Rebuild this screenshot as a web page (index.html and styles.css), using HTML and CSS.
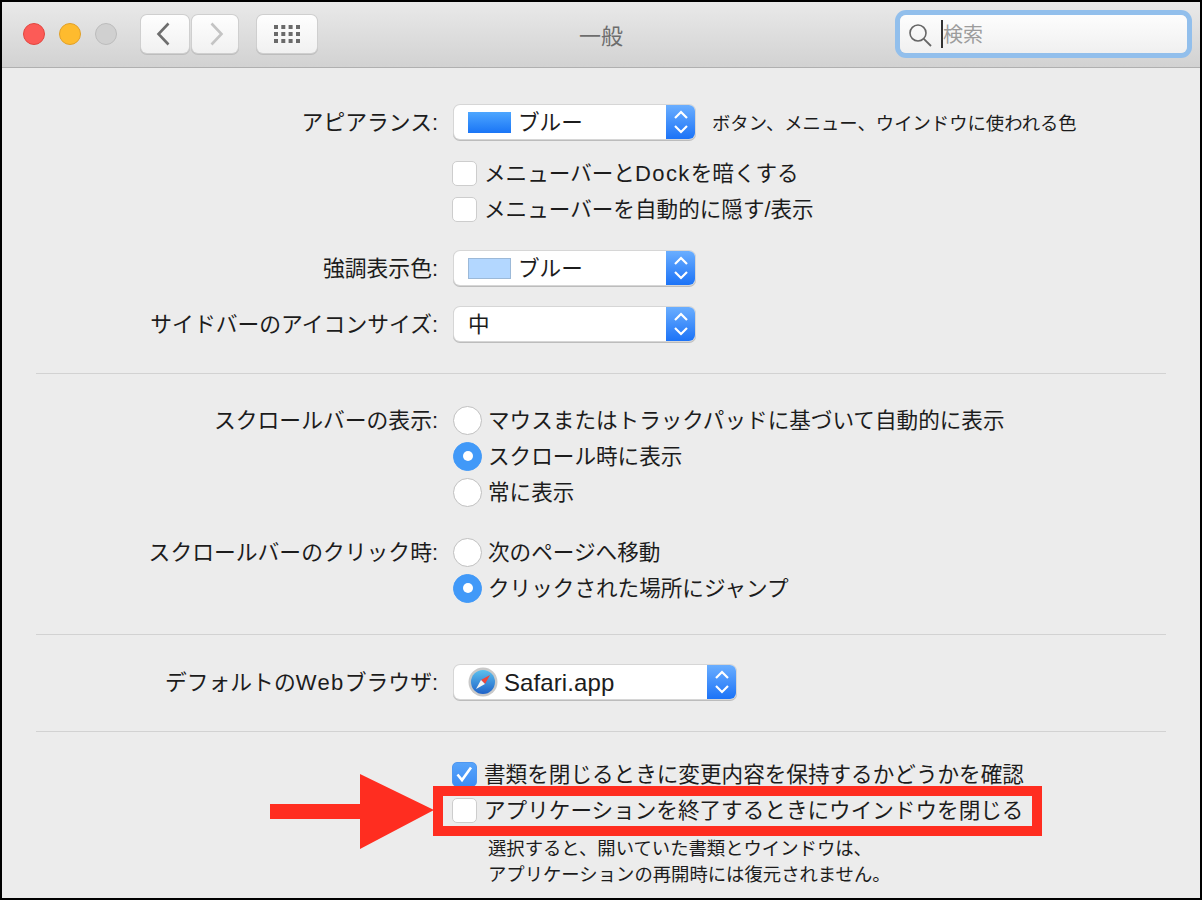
FILE: index.html
```html
<!DOCTYPE html>
<html lang="ja">
<head>
<meta charset="utf-8">
<title>一般</title>
<link rel="stylesheet" href="styles.css">
</head>
<body>
<div class="window">
  <header class="toolbar">
    <div class="lights">
      <span class="light red"></span>
      <span class="light yellow"></span>
      <span class="light gray"></span>
    </div>
    <div class="nav">
      <button class="tool back"><svg width="14" height="24" viewBox="0 0 14 24"><path d="M12.5 1.5 L2.5 12 L12.5 22.5" fill="none" stroke="#6e6e6e" stroke-width="2.6"/></svg></button>
      <button class="tool fwd"><svg width="14" height="24" viewBox="0 0 14 24"><path d="M1.5 1.5 L11.5 12 L1.5 22.5" fill="none" stroke="#c4c4c4" stroke-width="2.6"/></svg></button>
    </div>
    <button class="tool grid-btn">
      <svg width="26" height="18" viewBox="0 0 26 18" fill="#6a6a6a">
        <rect x="0" y="0" width="4" height="4"/><rect x="7.3" y="0" width="4" height="4"/><rect x="14.6" y="0" width="4" height="4"/><rect x="22" y="0" width="4" height="4"/>
        <rect x="0" y="7" width="4" height="4"/><rect x="7.3" y="7" width="4" height="4"/><rect x="14.6" y="7" width="4" height="4"/><rect x="22" y="7" width="4" height="4"/>
        <rect x="0" y="14" width="4" height="4"/><rect x="7.3" y="14" width="4" height="4"/><rect x="14.6" y="14" width="4" height="4"/><rect x="22" y="14" width="4" height="4"/>
      </svg>
    </button>
    <div class="title">一般</div>
    <div class="search">
      <svg class="lens" width="24" height="24" viewBox="0 0 24 24"><circle cx="10" cy="10" r="8" fill="none" stroke="#666" stroke-width="1.6"/><path d="M15.8 15.8 L23 23" stroke="#666" stroke-width="1.8"/></svg>
      <span class="caret"></span>
      <span class="placeholder">検索</span>
    </div>
  </header>

  <main class="content">
    <section class="section s1">
      <div class="row">
        <div class="label">アピアランス:</div>
        <div class="control inline">
          <div class="popup"><span class="swatch blue"></span><span class="txt">ブルー</span><span class="stepper"><svg width="18" height="28" viewBox="0 0 18 28"><path d="M3 10 L9 4 L15 10 M3 18 L9 24 L15 18" fill="none" stroke="#fff" stroke-width="2.2"/></svg></span></div>
          <span class="note">ボタン、メニュー、ウインドウに使われる色</span>
        </div>
      </div>
      <div class="row gap15">
        <div class="label"></div>
        <div class="control"><label class="check"><span class="box"></span><span class="txt">メニューバーと<span class="latin">Dock</span>を暗くする</span></label></div>
      </div>
      <div class="row">
        <div class="label"></div>
        <div class="control"><label class="check"><span class="box"></span><span class="txt">メニューバーを自動的に隠す/表示</span></label></div>
      </div>
      <div class="row gap23">
        <div class="label">強調表示色:</div>
        <div class="control">
          <div class="popup"><span class="swatch light-blue"></span><span class="txt">ブルー</span><span class="stepper"><svg width="18" height="28" viewBox="0 0 18 28"><path d="M3 10 L9 4 L15 10 M3 18 L9 24 L15 18" fill="none" stroke="#fff" stroke-width="2.2"/></svg></span></div>
        </div>
      </div>
      <div class="row gap20">
        <div class="label">サイドバーのアイコンサイズ:</div>
        <div class="control">
          <div class="popup"><span class="txt">中</span><span class="stepper"><svg width="18" height="28" viewBox="0 0 18 28"><path d="M3 10 L9 4 L15 10 M3 18 L9 24 L15 18" fill="none" stroke="#fff" stroke-width="2.2"/></svg></span></div>
        </div>
      </div>
    </section>
    <hr class="rule">
    <section class="section s2">
      <div class="row">
        <div class="label">スクロールバーの表示:</div>
        <div class="control"><label class="radio"><span class="dot"></span><span class="txt">マウスまたはトラックパッドに基づいて自動的に表示</span></label></div>
      </div>
      <div class="row">
        <div class="label"></div>
        <div class="control"><label class="radio"><span class="dot on"></span><span class="txt">スクロール時に表示</span></label></div>
      </div>
      <div class="row">
        <div class="label"></div>
        <div class="control"><label class="radio"><span class="dot"></span><span class="txt">常に表示</span></label></div>
      </div>
      <div class="row gap25">
        <div class="label">スクロールバーのクリック時:</div>
        <div class="control"><label class="radio"><span class="dot"></span><span class="txt">次のページへ移動</span></label></div>
      </div>
      <div class="row">
        <div class="label"></div>
        <div class="control"><label class="radio"><span class="dot on"></span><span class="txt">クリックされた場所にジャンプ</span></label></div>
      </div>
    </section>
    <hr class="rule">
    <section class="section s3">
      <div class="row">
        <div class="label">デフォルトの<span class="latin">Web</span>ブラウザ:</div>
        <div class="control">
          <div class="popup wide">
            <svg class="safari" width="30" height="30" viewBox="0 0 30 30">
              <defs><linearGradient id="sf" x1="0" y1="0" x2="0" y2="1"><stop offset="0" stop-color="#5cc0ee"/><stop offset="1" stop-color="#1f62c8"/></linearGradient></defs>
              <circle cx="15" cy="15" r="14.5" fill="#c9c9c9"/>
              <circle cx="15" cy="15" r="12" fill="url(#sf)"/>
              <path d="M22 8 L13 13 L17 17 Z" fill="#f0453a"/>
              <path d="M8 22 L13 13 L17 17 Z" fill="#f4f4f4"/>
            </svg>
            <span class="txt safari-text">Safari.app</span>
            <span class="stepper"><svg width="18" height="28" viewBox="0 0 18 28"><path d="M3 10 L9 4 L15 10 M3 18 L9 24 L15 18" fill="none" stroke="#fff" stroke-width="2.2"/></svg></span>
          </div>
        </div>
      </div>
    </section>
    <hr class="rule">
    <section class="section s4">
      <div class="row">
        <div class="label"></div>
        <div class="control"><label class="check"><span class="box checked"><svg width="19" height="19" viewBox="0 0 19 19"><path d="M2.5 9.5 L7 15 L16 2.5" fill="none" stroke="#fff" stroke-width="2.6"/></svg></span><span class="txt">書類を閉じるときに変更内容を保持するかどうかを確認</span></label></div>
      </div>
      <div class="row">
        <div class="label"></div>
        <div class="control"><label class="check"><span class="box"></span><span class="txt">アプリケーションを終了するときにウインドウを閉じる</span></label></div>
      </div>
      <div class="row">
        <div class="label"></div>
        <p class="help">選択すると、開いていた書類とウインドウは、<br>アプリケーションの再開時には復元されません。</p>
      </div>
    </section>
  </main>

  <div class="highlight"></div>
  <svg class="arrow" width="166" height="77" viewBox="0 0 166 77"><path d="M2 31 H92 V1 L166 37 L92 76 V46 H2 Z" fill="#ff2d20"/></svg>
</div>
</body>
</html>
```
FILE: styles.css
```css
* { box-sizing: border-box; }
html, body { margin: 0; padding: 0; }
body {
  width: 1202px;
  height: 900px;
  overflow: hidden;
  background: #000;
  font-family: "Liberation Sans", "Noto Sans CJK JP", sans-serif;
  font-size: 21.6px;
  color: #1c1c1c;
}
.window {
  position: relative;
  width: 1198px;
  height: 896px;
  margin: 2px;
  background: #ececec;
  overflow: hidden;
}
.toolbar {
  display: flex;
  align-items: center;
  height: 66px;
  background: linear-gradient(#e9e9e9, #d2d2d2);
  border-bottom: 1px solid #b0b0b0;
  padding: 0 0 1px 21px;
  position: relative;
}
.lights { display: flex; gap: 14px; }
.light { width: 22px; height: 22px; border-radius: 50%; border: 1px solid; }
.light.red { background: #fc5b57; border-color: #e2463f; }
.light.yellow { background: #febb2e; border-color: #e1a028; }
.light.gray { background: #d0d0d0; border-color: #bcbcbc; }
.nav { display: flex; gap: 3px; margin-left: 24px; }
.tool {
  display: flex;
  align-items: center;
  justify-content: center;
  height: 38px;
  padding: 0;
  border: 0;
  border-radius: 6px;
  background: linear-gradient(#fefefe, #f1f1f1);
  box-shadow: 0 0 0 1px #cfcfcf, 0 1px 0 1px #bdbdbd;
}
.back { width: 48px; padding-right: 4px; }
.fwd { width: 46px; padding-left: 4px; }
.grid-btn { width: 60px; margin-left: 19px; }
.title {
  position: absolute;
  left: 577px;
  top: 20px;
  width: 44px;
  text-align: center;
  line-height: 30px;
  font-size: 22px;
  color: #6d6d6d;
}
.search {
  display: flex;
  align-items: center;
  width: 287px;
  height: 38px;
  margin-left: auto;
  margin-right: 13px;
  padding-left: 8px;
  border-radius: 6px;
  background: linear-gradient(#fdfdfd, #f0f0f0);
  box-shadow: 0 0 0 5px #92bfec;
}
.lens { margin-top: 2px; }
.caret { width: 2px; height: 28px; background: #333; margin-left: 9px; }
.placeholder { font-size: 20px; color: #9c9c9c; line-height: 22px; padding-top: 2px; }

.content { display: block; }
.section { display: block; }
.s1 { padding-top: 36px; padding-bottom: 31px; }
.s2 { padding-top: 28px; padding-bottom: 28px; }
.s3 { padding-top: 29px; padding-bottom: 31px; }
.s4 { padding-top: 24px; }
.rule { height: 1px; margin: 0 34px; border: 0; background: #d2d2d2; }
.row {
  display: grid;
  grid-template-columns: 436px 1fr;
  column-gap: 14px;
  align-items: center;
  min-height: 36px;
}
.gap15 { margin-top: 15px; }
.gap20 { margin-top: 20px; }
.gap23 { margin-top: 23px; }
.gap25 { margin-top: 24px; }
.label { text-align: right; line-height: 34px; padding-top: 2px; font-size: 21.8px; }
.txt { display: block; line-height: 34px; padding-top: 2px; }
.latin { font-size: 22px; letter-spacing: 1.4px; }
.control.inline { display: flex; align-items: center; gap: 17px; }
.popup {
  display: flex;
  align-items: center;
  width: 241px;
  height: 34px;
  margin-left: 2px;
  border-radius: 6px;
  background: #fff;
  box-shadow: 0 0 0 1px #d6d6d6, 0 1px 0 1px #bcbcbc;
  overflow: hidden;
  padding-left: 14px;
}
.popup.wide { width: 282px; }
.swatch { width: 43px; height: 21px; margin-right: 7px; flex: none; }
.swatch.blue { background: linear-gradient(#4da6ff, #1a75f6); }
.swatch.light-blue { background: #b3d7ff; border: 1px solid #9cb9d8; }
.safari { margin-right: 6px; flex: none; }
.safari-text { font-size: 24px; letter-spacing: 0.1px; }
.stepper {
  display: flex;
  align-items: center;
  justify-content: center;
  width: 29px;
  height: 100%;
  margin-left: auto;
  flex: none;
  background: linear-gradient(#6aaeff, #1c73f7);
}
.note { font-size: 18.35px; line-height: 32px; padding-top: 4px; }
.check { display: flex; align-items: center; gap: 7px; }
.box {
  display: flex;
  align-items: center;
  justify-content: center;
  width: 25px;
  height: 25px;
  border-radius: 5px;
  background: #fff;
  border: 1px solid #cdcdcd;
  flex: none;
}
.box.checked { background: linear-gradient(#58a4fa, #3c8cf5); border-color: #4f97f0; }
.radio { display: flex; align-items: center; gap: 6px; }
.dot {
  display: flex;
  align-items: center;
  justify-content: center;
  width: 29px;
  height: 29px;
  margin-left: 1px;
  border-radius: 50%;
  background: #fff;
  border: 1px solid #c0c0c0;
  flex: none;
}
.dot.on { background: #4199f8; border-color: #4199f8; }
.dot.on::after { content: ""; width: 10px; height: 10px; border-radius: 50%; background: #fff; }
.help {
  margin: 8px 0 0 36px;
  font-size: 18.35px;
  line-height: 26px;
}
.highlight {
  position: absolute;
  left: 431px;
  top: 784px;
  width: 609px;
  height: 50px;
  border: 10px solid #ff2d20;
}
.arrow { position: absolute; left: 266px; top: 771px; }
```
